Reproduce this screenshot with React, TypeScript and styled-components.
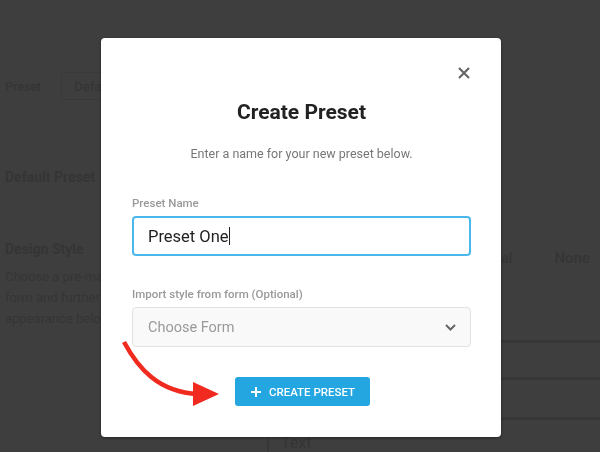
import styled, { createGlobalStyle } from "styled-components";

const Global = createGlobalStyle`
  html, body {
    margin: 0;
    padding: 0;
    background: #3e3e3e;
    font-family: Roboto, "Liberation Sans", sans-serif;
  }
  * { box-sizing: border-box; }
`;

// dimmed page behind the overlay
const Page = styled.div`
  width: 600px;
  height: 452px;
  overflow: hidden;
  background: #3e3e3e;
  color: #353535;
  display: grid;
  grid-template-columns: 267px 1fr;
`;

const LeftCol = styled.div`
  width: 101px;
  overflow: hidden;
  padding: 72px 0 0 5px;
  display: flex;
  flex-direction: column;
`;

const Tabs = styled.div`
  display: flex;
  align-items: center;
  height: 28px;
  gap: 20px;
  font-size: 12.5px;
  font-weight: 500;
`;

const TabBox = styled.div`
  height: 28px;
  padding: 0 12px;
  display: flex;
  align-items: center;
  border: 1px solid #393939;
  border-radius: 3px;
  font-size: 13px;
  white-space: nowrap;
`;

const BgHeading = styled.div<{ $top: number }>`
  margin-top: ${(p) => p.$top}px;
  font-size: 14px;
  font-weight: 700;
  line-height: 20px;
  white-space: nowrap;
`;

const BgText = styled.div`
  margin-top: 7px;
  font-size: 13px;
  line-height: 21px;
  white-space: nowrap;
`;

const RightCol = styled.div`
  padding-top: 248px;
  display: flex;
  flex-direction: column;
`;

const OptionRow = styled.div`
  display: flex;
  justify-content: flex-end;
  gap: 42px;
  padding-right: 10px;
  font-size: 15px;
  font-weight: 500;
  line-height: 20px;
  height: 92px;
`;

const BgRow = styled.div<{ $h: number }>`
  height: ${(p) => p.$h}px;
  border-top: 3px solid #373737;
`;

const BgField = styled.div`
  border-left: 2px solid #373737;
  height: 40px;
  padding: 0 12px;
  font-size: 16px;
  line-height: 20px;
`;

const Overlay = styled.div`
  position: fixed;
  inset: 0;
  display: flex;
  justify-content: center;
  padding: 38px 0 0 2px;
`;

const Modal = styled.div`
  position: relative;
  width: 400px;
  height: 399px;
  background: #fff;
  border-radius: 4px;
  box-shadow: 0 1px 3px rgba(0, 0, 0, 0.4);
  padding: 61px 30px 0 31px;
  display: flex;
  flex-direction: column;
`;

const Close = styled.button`
  position: absolute;
  top: 27px;
  right: 29px;
  width: 16px;
  height: 16px;
  padding: 0;
  border: 0;
  background: none;
  display: flex;
  align-items: center;
  justify-content: center;
`;

const Title = styled.h2`
  margin: 0;
  text-align: center;
  font-size: 21px;
  line-height: 26px;
  font-weight: 700;
  color: #222;
`;

const Sub = styled.p`
  margin: 19px 0 0;
  text-align: center;
  font-size: 12.5px;
  line-height: 20px;
  color: #777;
`;

const Label = styled.label<{ $top: number }>`
  display: block;
  margin-top: ${(p) => p.$top}px;
  font-size: 11.5px;
  line-height: 16px;
  font-weight: 500;
  color: #999;
`;

const Field = styled.div<{ $focus?: boolean }>`
  margin-top: 5px;
  height: 40px;
  border-radius: 4px;
  display: flex;
  align-items: center;
  justify-content: space-between;
  padding: 0 14px 0 15px;
  border: ${(p) => (p.$focus ? "2px solid #4ab8ec" : "1px solid #e2e2e2")};
  background: ${(p) => (p.$focus ? "#fff" : "#f9f9f9")};
  color: ${(p) => (p.$focus ? "#222" : "#9a9a9a")};
  font-size: ${(p) => (p.$focus ? 16.5 : 14.5)}px;
  padding-left: ${(p) => (p.$focus ? 14 : 15)}px;
`;

const Caret = styled.span`
  display: inline-block;
  width: 1px;
  height: 18px;
  background: #222;
  vertical-align: -3px;
`;

const ButtonRow = styled.div`
  margin-top: 30px;
  display: flex;
  justify-content: center;
`;

const Button = styled.button`
  height: 29px;
  padding: 0 15px 0 16px;
  margin-left: 2px;
  display: flex;
  align-items: center;
  gap: 8px;
  border: 0;
  border-radius: 3px;
  background: #24a7e0;
  color: #fff;
  font-family: inherit;
  font-size: 11.5px;
  font-weight: 500;
  text-transform: uppercase;
`;

const Arrow = styled.svg`
  position: fixed;
  left: 0;
  top: 0;
  pointer-events: none;
`;

export default function App() {
  return (
    <>
      <Global />
      <Page>
        <LeftCol>
          <Tabs>
            <span>Preset</span>
            <TabBox>Default Preset</TabBox>
          </Tabs>
          <BgHeading $top={67}>Default Preset</BgHeading>
          <BgHeading $top={52}>Design Style</BgHeading>
          <BgText>
            Choose a pre-made style for your
            <br />
            form and further customize its
            <br />
            appearance below.
          </BgText>
        </LeftCol>
        <RightCol>
          <OptionRow>
            <span>Normal</span>
            <span>None</span>
          </OptionRow>
          <BgRow $h={37} />
          <BgRow $h={40} />
          <BgRow $h={16} />
          <BgField>Text</BgField>
        </RightCol>
      </Page>
      <Overlay>
        <Modal>
          <Close aria-label="Close">
            <svg width="12" height="12" viewBox="0 0 12 12">
              <path d="M1 1L11 11M11 1L1 11" stroke="#666" strokeWidth="2.2" />
            </svg>
          </Close>
          <Title>Create Preset</Title>
          <Sub>Enter a name for your new preset below.</Sub>
          <Label $top={31}>Preset Name</Label>
          <Field $focus>
            <span>
              Preset One
              <Caret />
            </span>
          </Field>
          <Label $top={30}>Import style from form (Optional)</Label>
          <Field>
            <span>Choose Form</span>
            <svg width="11" height="7" viewBox="0 0 11 7">
              <path d="M1 1l4.5 4.5L10 1" fill="none" stroke="#666" strokeWidth="2" />
            </svg>
          </Field>
          <ButtonRow>
            <Button>
              <svg width="10" height="10" viewBox="0 0 10 10">
                <path d="M5 0v10M0 5h10" stroke="#fff" strokeWidth="2" />
              </svg>
              Create Preset
            </Button>
          </ButtonRow>
        </Modal>
      </Overlay>
      <Arrow width="600" height="452" viewBox="0 0 600 452">
        <path
          d="M124 342 C 138 368, 158 392, 198 394"
          fill="none"
          stroke="#f02a1e"
          strokeWidth="4.5"
        />
        <path d="M193 382 L219 394 L193 406 Z" fill="#f02a1e" />
      </Arrow>
    </>
  );
}
